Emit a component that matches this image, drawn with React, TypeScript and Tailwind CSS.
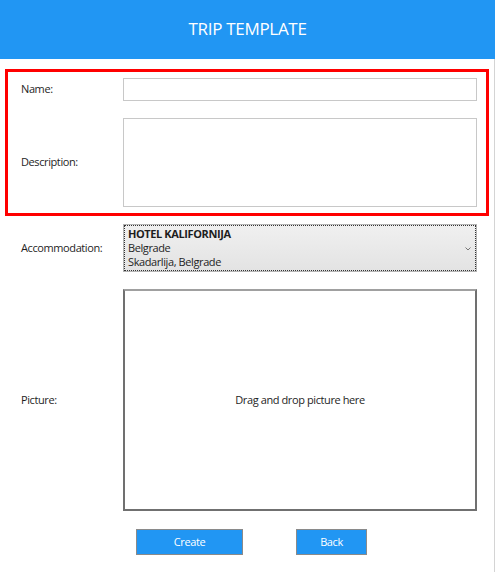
import type { ReactNode } from "react";

function Row({ label, children }: { label: string; children: ReactNode }) {
  return (
    <div className="flex items-center">
      <span className="w-[102px] shrink-0">{label}</span>
      {children}
    </div>
  );
}

export default function App() {
  return (
    <main
      className="h-[572px] w-[496px] bg-white text-[11px] tracking-[-0.4px] text-[#1e1e1e]"
      style={{ fontFamily: '"Open Sans", "Noto Sans", sans-serif' }}
    >
      <header className="flex h-[59px] w-[495px] items-center justify-center bg-[#2196f3] pb-[1px]">
        <h1 className="text-[17px] tracking-[-0.3px] text-white">TRIP TEMPLATE</h1>
      </header>

      <div className="h-[513px] w-[495px] border-r border-[#d4d4d4] pt-[10px]">
        <div className="mx-[5px] flex flex-col gap-[17px] border-[3px] border-[#ff0000] pb-[6px] pl-[13px] pt-[6px]">
          <Row label="Name:">
            <div className="h-[23px] w-[354px] border border-[#c8c8c8] bg-white" />
          </Row>
          <Row label="Description:">
            <div className="h-[89px] w-[354px] border border-[#c8c8c8] bg-white" />
          </Row>
        </div>

        <div className="mt-[8px] flex flex-col gap-[17px] pl-[21px]">
          <Row label="Accommodation:">
            <div className="h-[48px] w-[354px] border border-[#b4b4b4] bg-gradient-to-b from-[#f0f0f0] to-[#e3e3e3]">
              <div className="relative flex h-full flex-col justify-center border border-dotted border-[#333] pl-[3px] leading-[14px]">
                <span className="font-bold">HOTEL KALIFORNIJA</span>
                <span>Belgrade</span>
                <span>Skadarlija, Belgrade</span>
                <svg
                  className="absolute right-[4px] top-[21px]"
                  width="6"
                  height="4"
                  viewBox="0 0 6 4"
                  fill="none"
                  stroke="#777"
                  strokeWidth="1"
                >
                  <path d="M0.5 0.5 L3 3 L5.5 0.5" />
                </svg>
              </div>
            </div>
          </Row>
          <Row label="Picture:">
            <div className="flex h-[222px] w-[354px] items-center justify-center border-2 border-[#707070] border-t-[#a0a0a0] bg-white">
              Drag and drop picture here
            </div>
          </Row>
        </div>

        <div className="mt-[18px] flex pl-[136px] text-white">
          <button className="h-[26px] w-[107px] border border-[#8a8a8a] bg-[#2196f3]">Create</button>
          <button className="ml-[53px] h-[26px] w-[71px] border border-[#8a8a8a] bg-[#2196f3]">Back</button>
        </div>
      </div>
    </main>
  );
}
